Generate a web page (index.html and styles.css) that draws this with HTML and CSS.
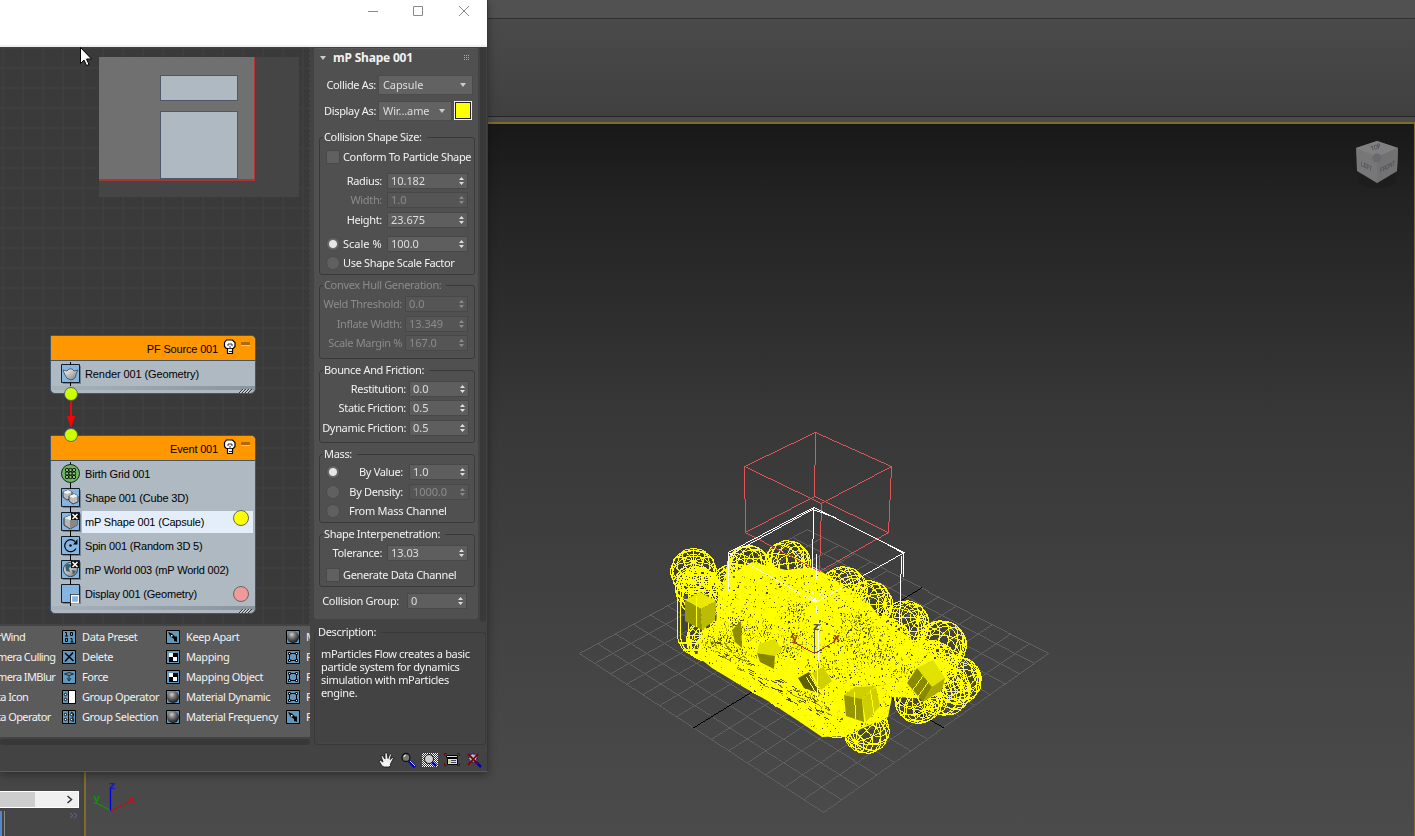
FILE: index.html
```html
<!DOCTYPE html>
<html lang="en">
<head>
<meta charset="utf-8">
<title>Particle View</title>
<link rel="stylesheet" href="styles.css">
</head>
<body>
<svg class="defs" width="0" height="0">
  <defs>
    <radialGradient id="ball" cx=".4" cy=".3" r=".7"><stop offset="0" stop-color="#d0d0d0"/><stop offset=".4" stop-color="#777"/><stop offset="1" stop-color="#181818"/></radialGradient>
    <linearGradient id="solid" x2="1" y2="1"><stop offset="0" stop-color="#fff"/><stop offset="1" stop-color="#777"/></linearGradient>
    <pattern id="dots" width="2" height="2" patternUnits="userSpaceOnUse"><path d="M0 0h1v1H0zM1 1h1v1H1z" fill="#fff"/></pattern>
  </defs>
  <symbol id="tile" viewBox="0 0 14 14"><path d="M.5.5h13v13H.5z" fill="#6298be" stroke="#000"/></symbol>
  <symbol id="i-data" viewBox="0 0 14 14"><use href="#tile"/><path d="M3 2.500h1.500V6M3 6h3M8.500 2.500h2v3h-2zM3.500 8.500h2v3h-2zM8.500 8.500H10V12M8.500 12h3" fill="none" stroke="#000"/></symbol>
  <symbol id="i-delete" viewBox="0 0 14 14"><use href="#tile"/><path d="M3 3l8.500 8M11 2.500L3 11.500" stroke="#000" stroke-width="1.500"/></symbol>
  <symbol id="i-force" viewBox="0 0 14 14"><use href="#tile"/><path d="M2.500 4Q7 1 11.500 4M2.500 4Q7 7 11.500 4M7 5v6M5 8l2 3 2-3" fill="none" stroke="#172e3d"/></symbol>
  <symbol id="i-group" viewBox="0 0 14 14"><use href="#tile"/><path d="M6.500.5h7v13h-7z" fill="#fff" stroke="#000"/><circle cx="3.500" cy="4.500" r="1.200" fill="#fff" stroke="#000"/><circle cx="3.500" cy="9.500" r="1.200" fill="#fff" stroke="#000"/></symbol>
  <symbol id="i-select" viewBox="0 0 14 14"><use href="#tile"/><path d="M6.500 1v12M9 2q3 1 2.500 3t-1 2q1.500 2 .5 5" fill="none" stroke="#000"/><g fill="#fff" stroke="#000"><circle cx="3.500" cy="4.500" r="1.200"/><circle cx="3.500" cy="9.500" r="1.200"/><circle cx="9.500" cy="4.500" r="1.200"/><circle cx="9.500" cy="9.500" r="1.200"/></g></symbol>
  <symbol id="i-keep" viewBox="0 0 14 14"><use href="#tile"/><path d="M2 2l4 1.500 3 3h2V11.500L12 12l-4-1V9L4.500 6.500z" fill="#000"/><path d="M5 5h1.500v1.500H5z" fill="#fff"/></symbol>
  <symbol id="i-map" viewBox="0 0 14 14"><use href="#tile"/><path d="M3 3h9v9H3z" fill="#000"/><path d="M3 3h4v4H3zM7 7h4v4H7z" fill="#fff"/></symbol>
  <symbol id="i-mat" viewBox="0 0 14 14"><use href="#tile"/><circle cx="7" cy="7" r="6" fill="url(#ball)"/></symbol>
  <symbol id="i-pos" viewBox="0 0 14 14"><use href="#tile"/><path d="M3.500 3.500h7v7h-7z" fill="none" stroke="#000"/><path d="M2.500 2.500h2v2h-2zM9.500 2.500h2v2h-2zM2.500 9.500h2v2h-2zM9.500 9.500h2v2h-2z" fill="#fff" stroke="#000" stroke-width=".9"/></symbol>
  <symbol id="n-box" viewBox="0 0 20 24"><path d="M2 4h18v18H2z" fill="#77838d"/><path d="M.5 2.500h18v18H.5z" fill="#86b5e2" stroke="#15202a"/><path d="M9.500 0v3M9.500 20v4" stroke="#000"/></symbol>
  <symbol id="bulb" viewBox="0 0 14 16"><path d="M4.500 9.500H3.200L1.500 7.500v-4l2-2.500h6l2.500 2.500v4l-1.700 2H9.500v5h-5z" fill="#fff" stroke="#000" stroke-width="1.200"/><path d="M5 7V5h4v2M7 7v2M5 9.500h4M6 12.500h3" fill="none" stroke="#000" stroke-width=".8"/></symbol>
  <symbol id="hatch" viewBox="0 0 14 5"><path d="M1 5l4-4M4 5l4-4M7 5l4-4M10 5l4-4" stroke="#333"/><path d="M2 5l4-4M5 5l4-4M8 5l4-4" stroke="#eee" stroke-width=".7"/></symbol>
</svg>

<main class="desktop">
  <div class="menuband"></div>
  <div class="ribbon"></div>
  <div class="ribbon-edge"></div>
  <div class="lower">
    <aside class="timeline">
      <div class="hscroll"><span class="thumb"></span><svg width="8" height="9"><path d="M1.500 1l4 3.500-4 3.500" fill="none" stroke="#333" stroke-width="1.500"/></svg></div>
      <div class="trackrow"><i></i><svg width="9" height="7"><path d="M1 1l3 2.500L1 6M5 1l3 2.500L5 6" fill="none" stroke="#6060b8"/></svg></div>
    </aside>
    <section class="viewport">
      <canvas id="scene" width="1328" height="712"></canvas>
      <svg class="viewcube" width="50" height="56" viewBox="0 0 50 56">
        <ellipse cx="25" cy="43" rx="19" ry="8" fill="#181818" opacity=".4"/>
        <path d="M25 4l21 7-1 23-20 12L5 34 4 11z" fill="#777"/>
        <path d="M25 4l21 7-21 9L4 11z" fill="#808080"/><path d="M25 20l21-9-1 23-20 12z" fill="#727272"/>
        <circle cx="25" cy="21" r="4.500" fill="#686a6e"/>
        <g fill="#50545b"><text transform="translate(9 29) skewY(26)" textLength="11" lengthAdjust="spacingAndGlyphs">LEFT</text><text transform="translate(28 36) skewY(-28)" textLength="15" lengthAdjust="spacingAndGlyphs">FRONT</text><text transform="translate(20 14) rotate(-20)" textLength="10" lengthAdjust="spacingAndGlyphs">TOP</text></g>
      </svg>
      <svg class="axes" width="50" height="34" viewBox="0 0 50 34"><path d="M19.500 27.500v-22" stroke="#00d" stroke-width="1.300"/><path d="M20 28l18-9" stroke="#d00"/><path d="M19 27L5 20" stroke="#00a800"/><text x="18" y="6" fill="#1818cc">z</text><text x="37" y="20" fill="#b81818">x</text><text x="2" y="19" fill="#109010">y</text></svg>
    </section>
  </div>
</main>

<section class="window">
  <header class="titlebar">
    <svg width="104" height="12" viewBox="0 0 104 12" fill="none" stroke="#8a8a8a"><path d="M1 6.500h10M46.500 1.500h9v9h-9zM92 1l10 10M102 1L92 11"/></svg>
  </header>
  <div class="body">
    <div class="left">
      <div class="graph">
        <div class="minimap"><div class="mm-view"></div><div class="mm-node mm-a"></div><div class="mm-node mm-b"></div></div>
        <div class="node source">
          <div class="head"><span>PF Source 001</span><svg width="14" height="16"><use href="#bulb"/></svg><b></b></div>
          <div class="op"><svg width="20" height="24"><use href="#n-box"/><path d="M2 8l4 1 2-2h3l2 2 4-1-2 4q0 5-5 6-5-1-6-5z" fill="url(#solid)" stroke="#444" stroke-width=".8"/></svg><span>Render 001 (Geometry)</span></div>
          <div class="foot"><svg width="14" height="5"><use href="#hatch"/></svg></div>
        </div>
        <div class="node event">
          <div class="head"><span>Event 001</span><svg width="14" height="16"><use href="#bulb"/></svg><b></b></div>
          <div class="op"><svg width="20" height="24"><path d="M9.500 0v24" stroke="#000"/><circle cx="9.500" cy="11.500" r="9" fill="#70b860" stroke="#15202a"/><g fill="#84c874" stroke="#000" stroke-width=".9"><circle cx="6" cy="8" r="1.700"/><circle cx="9.500" cy="8" r="1.700"/><circle cx="13" cy="8" r="1.700"/><circle cx="6" cy="11.500" r="1.700"/><circle cx="9.500" cy="11.500" r="1.700"/><circle cx="13" cy="11.500" r="1.700"/><circle cx="6" cy="15" r="1.700"/><circle cx="9.500" cy="15" r="1.700"/><circle cx="13" cy="15" r="1.700"/></g></svg><span>Birth Grid 001</span></div>
          <div class="op"><svg width="20" height="24"><use href="#n-box"/><path d="M2 6l5-2 4 2v6l-5 2-4-3z" fill="#bbb" stroke="#222" stroke-width=".8"/><path d="M2 6l5-2 4 2-5 2z" fill="#f4f4f4"/><path d="M8 10l5-2 4 2v6l-5 2-4-3z" fill="#bbb" stroke="#222" stroke-width=".8"/><path d="M8 10l5-2 4 2-5 2z" fill="#f4f4f4"/></svg><span>Shape 001 (Cube 3D)</span></div>
          <div class="op picked"><svg width="20" height="24"><use href="#n-box"/><path d="M3 8l7-3 6 3v7l-7 4-6-4z" fill="#b5b5b5" stroke="#333"/><path d="M9 10l7-2v7l-7 4z" fill="#888"/><path d="M3 8l6 2 7-2-6-3z" fill="#eee"/><path d="M10 3h8v7h-8z" fill="#111"/><path d="M11.500 4l5 5M16.500 4l-5 5" stroke="#fff" stroke-width="1.500"/></svg><span>mP Shape 001 (Capsule)</span></div>
          <div class="op"><svg width="20" height="24"><use href="#n-box"/><path d="M14 7.500a6 6 0 1 0 1 7" fill="none" stroke="#000" stroke-width="1.200"/><path d="M16.500 5v5.500H12z"/><circle cx="9.500" cy="11.500" r="1.200"/></svg><span>Spin 001 (Random 3D 5)</span></div>
          <div class="op"><svg width="20" height="24"><use href="#n-box"/><circle cx="9.500" cy="11.500" r="7" fill="url(#solid)" stroke="#28434a"/><path d="M4 7q5-3 7 1l-3 2 1 4-4-1zM11 12l4 1-3 4z" fill="#40616a"/><path d="M10 3h8v7h-8z" fill="#111"/><path d="M11.500 4l5 5M16.500 4l-5 5" stroke="#fff" stroke-width="1.500"/></svg><span>mP World 003 (mP World 002)</span></div>
          <div class="op"><svg width="20" height="24"><use href="#n-box"/><path d="M9 12h9v9H9z" fill="#222"/><path d="M10.500 13.500h7v7h-7z" fill="#86b5e2" stroke="#fff" stroke-width="1.300"/></svg><span>Display 001 (Geometry)</span></div>
          <div class="foot"><svg width="14" height="5"><use href="#hatch"/></svg></div>
        </div>
        <svg class="wire" width="16" height="56" viewBox="0 0 16 56"><path d="M8 14v22" stroke="#f00" stroke-width="2"/><path d="M4 30h8l-4 12z" fill="#f00"/><g fill="#cf0" stroke="#53616c"><circle cx="8" cy="8" r="6.500"/><circle cx="8" cy="49" r="6.500"/></g></svg>
        <i class="dot yellow"></i><i class="dot pink"></i>
      </div>
      <div class="oplist">
        <span class="cut">rWind</span><svg><use href="#i-data"/></svg><span>Data Preset</span><svg><use href="#i-keep"/></svg><span>Keep Apart</span><svg><use href="#i-mat"/></svg><span>M</span>
        <span class="cut">mera Culling</span><svg><use href="#i-delete"/></svg><span>Delete</span><svg><use href="#i-map"/></svg><span>Mapping</span><svg><use href="#i-pos"/></svg><span>P</span>
        <span class="cut">mera IMBlur</span><svg><use href="#i-force"/></svg><span>Force</span><svg><use href="#i-map"/></svg><span>Mapping Object</span><svg><use href="#i-pos"/></svg><span>P</span>
        <span class="cut">ta Icon</span><svg><use href="#i-group"/></svg><span>Group Operator</span><svg><use href="#i-mat"/></svg><span>Material Dynamic</span><svg><use href="#i-pos"/></svg><span>P</span>
        <span class="cut">ta Operator</span><svg><use href="#i-select"/></svg><span>Group Selection</span><svg><use href="#i-mat"/></svg><span>Material Frequency</span><svg><use href="#i-keep"/></svg><span>P</span>
      </div>
      <div class="listscroll"></div>
    </div>
    <div class="right">
      <div class="panel">
        <div class="rollout">
          <div class="title"><i class="tri"></i><b>mP Shape 001</b><svg width="6" height="6"><path d="M0 .5h6M0 2.500h6M0 4.500h6" stroke="#aaa" stroke-dasharray="1 1"/></svg></div>
          <div class="row combo"><label>Collide As:</label><div class="drop">Capsule<i class="tri"></i></div></div>
          <div class="row combo"><label>Display As:</label><div class="drop">Wir...ame<i class="tri"></i></div><span class="swatch"></span></div>

          <fieldset class="g1"><legend>Collision Shape Size:</legend>
            <div class="row m4"><i class="check"></i><span class="lab">Conform To Particle Shape</span></div>
            <div class="row m6"><label>Radius:</label><div class="spin w81">10.182</div></div>
            <div class="row m1 off"><label>Width:</label><div class="spin w81">1.0</div></div>
            <div class="row m2"><label>Height:</label><div class="spin w81">23.675</div></div>
            <div class="row m6"><i class="radio on"></i><span class="lab scale">Scale %</span><div class="spin w81">100.0</div></div>
            <div class="row m1"><i class="radio"></i><span class="lab">Use Shape Scale Factor</span></div>
          </fieldset>
          <fieldset class="g2 off"><legend>Convex Hull Generation:</legend>
            <div class="row m3"><label>Weld Threshold:</label><div class="spin w63">0.0</div></div>
            <div class="row m2"><label>Inflate Width:</label><div class="spin w63">13.349</div></div>
            <div class="row m1"><label>Scale Margin %</label><div class="spin w63">167.0</div></div>
          </fieldset>
          <fieldset class="g3"><legend>Bounce And Friction:</legend>
            <div class="row m3"><label>Restitution:</label><div class="spin w60">0.0</div></div>
            <div class="row m1"><label>Static Friction:</label><div class="spin w60">0.5</div></div>
            <div class="row m2"><label>Dynamic Friction:</label><div class="spin w60">0.5</div></div>
          </fieldset>
          <fieldset class="g4"><legend>Mass:</legend>
            <div class="row m2"><i class="radio on"></i><label>By Value:</label><div class="spin w60">1.0</div></div>
            <div class="row m2"><i class="radio"></i><label>By Density:</label><div class="spin w60 off">1000.0</div></div>
            <div class="row m1"><i class="radio"></i><span class="lab shift">From Mass Channel</span></div>
          </fieldset>
          <fieldset class="g5"><legend>Shape Interpenetration:</legend>
            <div class="row m3"><label>Tolerance:</label><div class="spin w81">13.03</div></div>
            <div class="row m4"><i class="check"></i><span class="lab">Generate Data Channel</span></div>
          </fieldset>
          <div class="row last"><label>Collision Group:</label><div class="spin w60">0</div></div>
        </div>
        <div class="vtrack"></div>
      </div>
      <fieldset class="desc"><legend>Description:</legend><p>mParticles Flow creates a basic<br>particle system for dynamics<br>simulation with mParticles<br>engine.</p></fieldset>
      <div class="tools">
        <svg viewBox="0 0 16 16"><path d="M4 14L1 9l1-1 3 2-2-6 1-1 3 4V1l2-.5 1 6 2-5 1.500 1-1.500 5L15 5l.5 1-3 6-1 3H6z" fill="#eee" stroke="#111" stroke-width=".8"/><path d="M6 10h6v4H6z" fill="url(#dots)"/></svg>
        <svg viewBox="0 0 16 16"><path d="M9 9l6 6" stroke="#00b" stroke-width="3"/><path d="M10 9l5 5" stroke="#ddd"/><circle cx="6" cy="5.500" r="4" fill="#777" stroke="#111" stroke-width="1.300"/><path d="M4 5q0-2 2-2" stroke="#fff" fill="none"/></svg>
        <svg viewBox="0 0 16 16"><path d="M0 1h16v14H0z" fill="#333"/><path d="M0 1h16v14H0z" fill="url(#dots)"/><path d="M10 10l4 4" stroke="#00b" stroke-width="2.500"/><circle cx="7" cy="7" r="4.500" fill="#ccc" stroke="#111"/></svg>
        <svg viewBox="0 0 16 16"><path d="M.5 4V1.500H3M13 1.500h2.500V4M.5 11v2.500H3M13 13.500h2.500V11" fill="none" stroke="#800000"/><path d="M2.500 3.500h11v2h-11zM3.500 6.500h10v6h-10z" fill="#ddd" stroke="#000"/><path d="M7 8.500h5M7 10.500h5" stroke="#446"/><path d="M4.500 8.500h2v2h-2z" fill="#cc0"/></svg>
        <svg viewBox="0 0 16 16"><path d="M9 9l6 6" stroke="#00b" stroke-width="2.500"/><circle cx="7" cy="6" r="4" fill="#bbb" stroke="#008" stroke-dasharray="2 1"/><path d="M2 2l10 10M12 2L2 13" stroke="#800000" stroke-width="1.800"/></svg>
      </div>
    </div>
  </div>
</section>
<svg class="cursor" width="13" height="20" viewBox="0 0 13 20"><path d="M.5.5v16l3.500-3.500 2.500 5.500 2.500-1-2.500-5.500h5z" fill="#fff" stroke="#000"/></svg>
<script src="scene.js"></script>
</body>
</html>
```
FILE: styles.css
```css
* { box-sizing: border-box; }
body { margin: 0; width: 1415px; height: 836px; overflow: hidden; position: relative; background: #444; color: #f2f2f2; font: 11px/14px "Noto Sans", sans-serif; }
.defs { position: absolute; }
svg { flex: none; display: block; }

.desktop { display: flex; flex-direction: column; height: 836px; }
.menuband { height: 19px; background: #515151; border-bottom: 1px solid #303030; }
.ribbon { height: 98px; background: linear-gradient(#4a4a4a, #404040); border-bottom: 1px solid #262626; }
.ribbon-edge { height: 5px; background: #4b4b4b; }
.lower { flex: 1; display: flex; }
.timeline { width: 84px; background: #464646; padding-top: 669px; border-right: 4px solid #434343; }
.hscroll { width: 79px; height: 17px; background: #f0f0f0; border: 1px solid #fff; border-left: 0; display: flex; align-items: center; justify-content: space-between; padding-right: 4px; }
.thumb { width: 35px; height: 15px; background: #cdcdcd; }
.trackrow { display: flex; justify-content: space-between; align-items: flex-start; padding: 3px 2px 0 0; }
.trackrow i { width: 6px; height: 25px; background: linear-gradient(90deg, #5487c3 2px, #444 2px 4px, #8a8a8a 4px 5px, #444 5px); }
.trackrow svg { margin-top: 1px; }
.viewport { flex: 1; position: relative; border: 2px solid #806b29; border-right-width: 1px; border-bottom: 0; background: linear-gradient(#181818 0, #232323 11%, #383838 42%, #434343 72%, #4b4b4b 100%); overflow: hidden; }
#scene { display: block; }
.viewcube { position: absolute; right: 12px; top: 13px; }
.viewcube text { font: bold 7px "Liberation Sans", sans-serif; }
.axes { position: absolute; left: 5px; bottom: 19px; }
.axes text { font: bold 11px "DejaVu Sans", sans-serif; }

.window { position: absolute; left: 0; top: 0; width: 488px; height: 772px; background: #434343; border-right: 1px solid #363636; border-bottom: 1px solid #5b5b5b; box-shadow: 0 3px 8px rgba(0,0,0,.35); }
.titlebar { height: 47px; background: #fff; border-bottom: 2px solid #f0f0f0; display: flex; justify-content: flex-end; padding: 5px 16px 0 0; }
.body { display: grid; grid-template-columns: 314px 173px; height: 724px; }

.graph { position: relative; width: 310px; height: 577px; overflow: hidden; background-color: #3a3a3a; background-image: linear-gradient(90deg, transparent 2px, #3e3e3e 2px, #3e3e3e 4px, transparent 4px), linear-gradient(#3e3e3e 2px, transparent 2px); background-size: 20px 20px; border-right: 1px dashed #454545; }
.minimap { position: absolute; left: 99px; top: 10px; width: 200px; height: 140px; background: #454545; }
.mm-view { position: absolute; left: 0; top: 0; width: 156px; height: 124px; background: #707070; border-right: 1px solid #b93434; border-bottom: 2px solid #a93434; }
.mm-node { position: absolute; left: 61px; width: 78px; background: #afb9c2; border: 1px solid #4b596a; }
.mm-a { top: 18px; height: 26px; }
.mm-b { top: 54px; height: 68px; }
.node { position: absolute; left: 50px; width: 206px; background: #afb9c2; border: 1px solid #46566a; border-radius: 2px 5px 6px 5px; color: #000; font: 11px/14px "Liberation Sans", sans-serif; letter-spacing: -.1px; overflow: hidden; }
.source { top: 288px; }
.source .op { height: 25px; padding-top: 1px; }
.event { top: 388px; }
.head { height: 25px; background: #ff9700; border-bottom: 1px solid #46566a; display: flex; align-items: center; justify-content: flex-end; gap: 5px; padding: 2px 5px 0 0; letter-spacing: -.17px; }
.head b { width: 9px; height: 4px; background: #a96a10; border-bottom: 1px solid #ffc66c; margin: -10px 0 0 -1px; }
.head svg { margin-top: -4px; }
.op { height: 24px; display: flex; align-items: center; padding-left: 10px; gap: 1px; white-space: nowrap; }
.op span { height: 22px; line-height: 23px; padding: 0 3px; width: 171px; }
.event .op span { letter-spacing: -.19px; }
.picked span { background: #e4eefa; }
.foot { height: 7px; display: flex; justify-content: flex-end; padding: 2px 3px 0 0; background: linear-gradient(90deg, #a8b2bb, #8b949c) top / 100% 4px no-repeat; }
.event .op:nth-of-type(2) { margin-top: 1px; }
.wire { position: absolute; left: 63px; top: 339px; }
.dot { position: absolute; left: 233px; width: 16px; height: 16px; border-radius: 50%; border: 1px solid #666; }
.yellow { top: 463px; background: #ff0; }
.pink { top: 539px; background: #f09a9c; }
.oplist { margin-top: 2px; width: 310px; height: 111px; background: #5b5b5b; display: grid; grid-template-columns: 62px 20px 84px 20px 100px 20px 4px; grid-auto-rows: 20px; align-items: center; padding-top: 1px; overflow: hidden; white-space: nowrap; letter-spacing: -.4px; }
.oplist svg { width: 14px; height: 14px; }
.oplist span { min-width: 0; }
.oplist .cut { margin-left: -3px; letter-spacing: -.6px; }
.listscroll { height: 6px; margin-top: 2px; width: 310px; background: #383838; border-radius: 3px; }

.right { display: flex; flex-direction: column; letter-spacing: -.33px; }
.panel { display: flex; height: 575px; }
.rollout { width: 164px; height: 571px; margin-top: 1px; background: #505050; border-radius: 2px 2px 3px 3px; padding: 0 3px 0 5px; white-space: nowrap; border-top: 1px solid #5a5a5a; }
.vtrack { width: 6px; margin-left: 2px; background: #393939; border-radius: 0 0 3px 3px; }
.title { height: 18px; display: flex; align-items: center; font-size: 12px; padding: 0 5px 0 1px; letter-spacing: -.2px; }
.title b { flex: 1; margin-left: 7px; }
.tri { width: 0; height: 0; border: 3.500px solid transparent; border-top: 4px solid #ccc; border-bottom: 0; }
.row { display: flex; height: 18px; align-items: center; padding: 0 6px 0 6px; }
.row > * { flex: none; }
.row label { flex: 1; min-width: 0; display: flex; justify-content: flex-end; padding: 0 5px 1px 0; }
.combo { height: 20px; margin-top: 8px; padding: 0 2px 0 0; }
.combo + .combo { margin-top: 6px; }
.combo label { flex: none; width: 59px; padding: 0 2px 0 0; }
.drop { flex: 1 !important; height: 20px; display: flex; justify-content: space-between; align-items: center; background: #626262; border: 1px solid #4b4b4b; color: #ddd; padding: 0 6px 0 4px; letter-spacing: -.1px; }
.swatch { width: 18px; height: 19px; background: #ff0; border: 2px solid #222; outline: 1px solid #eee; outline-offset: -1px; margin: -1px 1px 0 2px; }
fieldset { margin: 0; padding: 0; border: 1px solid #393939; border-radius: 3px; box-shadow: inset -1px -1px #5a5a5a22; min-width: 0; }
legend { margin-left: 3px; padding: 0 5px 0 1px; height: 14px; line-height: 14px; }
.g1 { height: 145px; margin-top: 9px; }
.g2 { height: 81px; margin-top: 3px; }
.g3 { height: 80px; margin-top: 4px; }
.g4 { height: 76px; margin-top: 4px; }
.g5 { height: 60px; margin-top: 4px; }
.m1 { margin-top: 1px; } .m2 { margin-top: 2px; } .m3 { margin-top: 3px; } .m4 { margin-top: 4px; } .m6 { margin-top: 6px; }
.g2 .row { padding-left: 2px; }
.g2 .row label { padding-right: 3px; }
.g3 .row, .g4 .row { padding-right: 5px; }
.g3 .row { padding-left: 2px; }
.g3 .row label { padding-right: 3px; }
.g4 .row label { padding-right: 6px; }
.last { margin-top: 5px; padding-right: 8px; }
.last label { padding-right: 8px; }
.spin { height: 16px; line-height: 14px; background: #5e5e5e; border: 1px solid #484848; color: #ddd; padding: 0 3px; letter-spacing: -.05px; display: flex; justify-content: space-between; align-items: center; }
.spin::after { content: ""; width: 5px; height: 8px; background: #ddd; clip-path: polygon(50% 0, 100% 38%, 0 38%, 0 62%, 100% 62%, 50% 100%, 0 62%, 0 38%); }
.w81 { width: 81px; } .w63 { width: 63px; } .w60 { width: 60px; }
.off, .off .spin { color: #8b8b8b; }
.off .spin, .spin.off { background: #555; color: #8b8b8b; }
.off .spin::after, .spin.off::after { background: #8b8b8b; }
.check { width: 14px; height: 14px; background: #606060; border: 1px solid #494949; }
.radio { width: 14px; height: 14px; border-radius: 50%; background: #606060; border: 1px solid #4b4b4b; }
.on { background: radial-gradient(circle, #e6e6e6 3.5px, #666 4.5px); }
.lab { padding-left: 3px; }
.g1 .lab, .g5 .lab { letter-spacing: -.34px; }
.g1 .scale { flex: 1; letter-spacing: 0; }
.lab.shift { padding-left: 9px; letter-spacing: -.25px; }
.desc { width: 172px; height: 120px; margin-top: 3px; }
.desc legend { margin-left: 2px; }
.desc p { margin: 8px 0 0 6px; line-height: 13px; white-space: nowrap; }
.tools { display: flex; gap: 6px; margin: 7px 0 0 64px; }
.tools svg { width: 16px; height: 16px; }
.cursor { position: absolute; left: 80px; top: 47px; }
```
FILE: scene.js
```js
// Draws the 3D viewport with unsmoothed one-pixel lines.
const ctx = document.getElementById('scene').getContext('2d');
ctx.translate(-86, -124);
let seed = 7;
const rnd = () => (seed = (seed * 16807) % 2147483647) / 2147483647;

function line(x0, y0, x1, y1, color) {
  ctx.fillStyle = color;
  const n = Math.max(1, Math.ceil(Math.max(Math.abs(x1 - x0), Math.abs(y1 - y0))));
  for (let i = 0; i <= n; i++) ctx.fillRect(Math.round(x0 + (x1 - x0) * i / n), Math.round(y0 + (y1 - y0) * i / n), 1, 1);
}
function path(pts, color) {
  for (let i = 1; i < pts.length; i++) line(...pts[i - 1], ...pts[i], color);
}
function poly(pts, color) {
  ctx.fillStyle = color;
  ctx.beginPath();
  pts.forEach(p => ctx.lineTo(p[0], p[1]));
  ctx.fill();
}

// Perspective ground plane from its four corners.
const A = [579, 653], B = [807, 529], C = [1048, 653], D = [823, 812];
const dx1 = B[0] - C[0], dx2 = D[0] - C[0], sx = A[0] - B[0] + C[0] - D[0];
const dy1 = B[1] - C[1], dy2 = D[1] - C[1], sy = A[1] - B[1] + C[1] - D[1];
const det = dx1 * dy2 - dx2 * dy1;
const g = (sx * dy2 - dx2 * sy) / det, h = (dx1 * sy - sx * dy1) / det;
const ground = (u, v) => {
  const w = g * u + h * v + 1;
  return [((B[0] - A[0] + g * B[0]) * u + (D[0] - A[0] + h * D[0]) * v + A[0]) / w,
          ((B[1] - A[1] + g * B[1]) * u + (D[1] - A[1] + h * D[1]) * v + A[1]) / w];
};
for (let i = 0; i <= 14; i++) {
  const t = i / 14;
  line(...ground(t, 0), ...ground(t, 1), '#606060');
  line(...ground(0, t), ...ground(1, t), '#606060');
}
line(...ground(0, .5), ...ground(1, .5), '#000');
line(...ground(.5, 0), ...ground(.5, 1), '#000');

// Wire capsule: a sphere cage stretched along its pole.
function capsule(cx, cy, r, len = 0, angle = rnd() * 6.28, tilt = .4 + rnd() * .8) {
  const ca = Math.cos(angle), sa = Math.sin(angle), ct = Math.cos(tilt), st = Math.sin(tilt);
  const p = (lat, lon) => {
    const x = Math.cos(lat) * Math.cos(lon) * r, z = Math.cos(lat) * Math.sin(lon) * r;
    const y = Math.sin(lat) * r + (lat > 0 ? len / 2 : -len / 2);
    const yy = y * ct - z * st;
    return [cx + x * ca - yy * sa, cy + x * sa + yy * ca];
  };
  for (let k = 0; k < 12; k++) {
    const pts = [];
    for (let j = -8; j <= 8; j++) pts.push(p(j * Math.PI / 16 + .001, k * Math.PI / 6));
    path(pts, '#ff0');
  }
  for (let k = -3; k <= 3; k++) {
    const pts = [];
    for (let j = 0; j <= 20; j++) pts.push(p(k * Math.PI / 8, j * Math.PI / 10));
    path(pts, '#ff0');
  }
}
[[693,571,23],[748,567,22],[787,563,23],[843,590,24],[868,604,24],[905,624,24],[941,645,25],
 [932,665,25],[957,680,24],[945,690,25],[918,699,24],[866,730,23]].forEach(s => capsule(...s));
capsule(699, 612, 22, 44, 0, .05);
capsule(699, 592, 22, 14, 2.6, .8);
capsule(735, 590, 24, 12);

const mass = [[697,656],[702,630],[716,625],[718,595],[726,577],[752,562],[786,570],[814,567],[840,583],[868,602],[882,620],[906,635],
  [925,650],[943,660],[948,681],[923,698],[892,697],[888,717],[868,726],[845,736],[822,737],[800,722],[768,701],[745,688],[712,668]];
poly(mass, '#ff0');
ctx.save();
ctx.beginPath(); mass.forEach(p => ctx.lineTo(...p)); ctx.clip();
const tones = ['#434343', '#a8a800', '#d9d900', '#737300', '#e8e800'];
for (let i = 0; i < 2500; i++) {
  ctx.fillStyle = tones[Math.floor(rnd() * tones.length)];
  const x = 692 + rnd() * 255, y = 575 + rnd() * 160;
  ctx.fillRect(Math.round(x), Math.round(y), rnd() < .2 ? 2 : 1, rnd() < .2 ? 2 : 1);
}
ctx.restore();

[[707,640,21],[729,653,21],[747,664,21],[765,675,21],[785,687,21],[805,699,21],[836,715,22],[888,640,22],[924,662,22]].forEach(s => capsule(...s));

// Shaded gaps where the solid cubes show between the wires.
[[715,640],[728,640],[735,625],[742,652],[795,610],[845,640],[865,657],[825,668],[885,650],[785,650],[905,670],[815,695],[855,620],[870,632],[760,630],[795,638]].forEach(([x, y]) => {
  for (let i = 0; i < 75; i++) {
    ctx.fillStyle = ['#999900', '#565620', '#bcbc00'][i % 3];
    ctx.fillRect(Math.round(x + (rnd() + rnd() - 1) * 19), Math.round(y + (rnd() + rnd() - 1) * 13), 1, rnd() < .35 ? 2 : 1);
  }
});
for (let i = 0; i < 80; i++) {
  const t = rnd(), x = 705 + t * 125, y = 650 + t * 76 - rnd() * 18;
  line(x, y, x + 2 + rnd() * 3, y + 2, i % 2 ? '#505020' : '#939300');
}

poly([[685,600],[700,592],[716,601],[701,609]], '#e8e800');
poly([[685,600],[701,609],[702,630],[685,621]], '#999900');
poly([[701,609],[716,601],[715,620],[702,630]], '#bcbc00');
path([[696,596],[696,626]], '#ff0');
poly([[757,653],[775,655],[774,669],[760,662]], '#858500');
poly([[759,644],[775,639],[782,650],[775,656],[757,653]], '#e0e000');
poly([[732,630],[741,621],[742,648],[735,642]], '#8d8d00');
poly([[798,678],[809,672],[821,694],[804,688]], '#606000');
poly([[812,673],[823,667],[832,681],[821,690]], '#d0d000');
path([[806,677],[817,695]], '#ffff70');
path([[809,675],[820,692]], '#ffff70');
poly([[844,695],[855,687],[876,686],[862,699]], '#cfcf00');
poly([[844,695],[862,699],[864,722],[846,716]], '#969600');
poly([[862,699],[876,687],[880,706],[866,722]], '#cfcf00');
path([[854,692],[855,718]], '#ff0'); path([[870,690],[874,716]], '#ff0');
poly([[917,668],[932,687],[945,678],[933,660]], '#e2e200');
poly([[917,668],[907,683],[923,702],[932,687]], '#898900');
poly([[932,687],[945,678],[942,690],[923,702]], '#aaaa00');
path([[922,676],[912,690]], '#ff0'); path([[928,681],[917,697]], '#ff0');

// Emitter gizmo boxes.
ctx.save();
ctx.translate(-1, -1);
const red = '#e05555';
path([[815,497],[746,533],[820,572],[889,533],[815,497],[816,433],[745,467],[822,504],[892,467],[816,433]], red);
path([[745,467],[746,533]], red);
path([[822,504],[820,572]], red);
path([[892,467],[889,533]], red);

path([[813,570],[814,508],[729,553],[816,603],[905,553],[814,508]], '#fff');
path([[729,577],[729,553],[730,631]], '#fff');
path([[731,555],[813,510],[836,518]], '#fff');
path([[881,541],[904,554],[904,577]], '#fff');
path([[902,557],[900,626]], '#fff');
path([[817,555],[816,603],[819,625],[818,697]], '#fff');
path([[806,590],[816,603],[824,590]], '#fff');
path([[809,594],[816,603],[812,590]], '#fff');
ctx.restore();

path([[794,642],[814,653],[834,641]], '#c02c10');
line(814, 653, 814, 629, '#555');
ctx.font = 'bold 11px "DejaVu Sans"';
ctx.fillStyle = '#b33b10';
ctx.fillText('y', 791, 641); ctx.fillText('x', 833, 641);
ctx.fillStyle = '#555533'; ctx.fillText('z', 813, 630);
```
